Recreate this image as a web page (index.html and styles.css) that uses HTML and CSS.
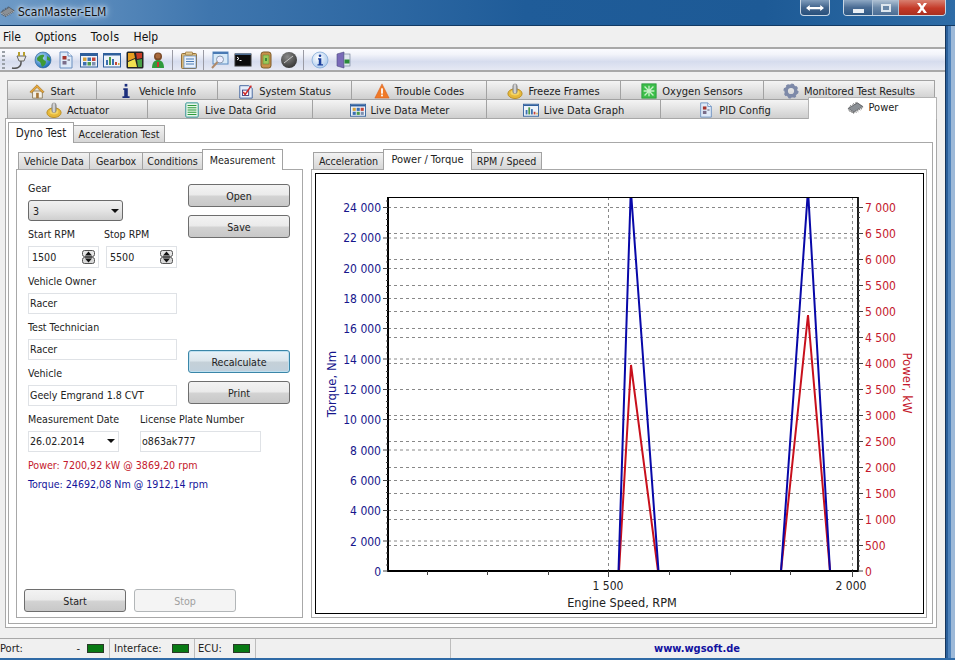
FILE: index.html
```html
<!DOCTYPE html>
<html lang="en">
<head>
<meta charset="utf-8">
<title>ScanMaster-ELM</title>
<link rel="stylesheet" href="styles.css">
</head>
<body>
<svg class="defs" width="0" height="0" aria-hidden="true">
  <defs>
    <radialGradient id="gGlobe" cx="40%" cy="35%" r="70%"><stop offset="0" stop-color="#bfe3ff"/><stop offset="1" stop-color="#1464b4"/></radialGradient>
    <radialGradient id="gInfo" cx="40%" cy="35%" r="70%"><stop offset="0" stop-color="#ffffff"/><stop offset="1" stop-color="#a9c8ec"/></radialGradient>
    <radialGradient id="gGauge" cx="40%" cy="30%" r="75%"><stop offset="0" stop-color="#8a8a8a"/><stop offset="1" stop-color="#333"/></radialGradient>
    <linearGradient id="gKnob" x1="0" x2="1" y1="0" y2="0"><stop offset="0" stop-color="#8d8d8d"/><stop offset=".5" stop-color="#e6e6e6"/><stop offset="1" stop-color="#777"/></linearGradient>
    <symbol id="i-chip" viewBox="0 0 18 14">
      <path d="M1 8 11 2l6 4-10 6z" fill="#8b9095" stroke="#3a3d40" stroke-width=".7"/>
      <path d="M1 8l6 4v1L1 9zM7 12l10-6v1L7 13z" fill="#e4e6e8" stroke="#555" stroke-width=".3"/>
      <path d="M2 10l1 1.500M4 11l1 1.500M6 12l1 1.500M9 11.500l1 1M11 10.500l1 1M13 9l1 1M15 8l1 1M3 6l1-1.500M6 4l1-1.500M9 2.500l1-1.500" stroke="#444" stroke-width=".8"/>
    </symbol>
    <symbol id="i-doc" viewBox="0 0 16 18">
      <path d="M2 1h8l4 4v12H2z" fill="#dfeaf8" stroke="#6a8fc0"/>
      <path d="M10 1v4h4" fill="#fff" stroke="#6a8fc0"/>
      <rect x="4.500" y="5" width="4" height="3.500" fill="#a5342c"/>
      <rect x="4.500" y="10" width="4" height="3.500" fill="#7a6d8a"/>
      <rect x="9.500" y="8" width="2.500" height="2" fill="#99a"/>
    </symbol>
    <symbol id="i-grid" viewBox="0 0 18 16">
      <rect x=".5" y="1.500" width="17" height="13.500" fill="#eef3fa" stroke="#2f5f9c"/>
      <rect x="1" y="2" width="16" height="2" fill="#2f5f9c"/>
      <rect x="3" y="5.500" width="3.500" height="3.500" fill="#d6a23a"/><rect x="7.500" y="5.500" width="3.500" height="3.500" fill="#3b6fb0"/><rect x="12" y="5.500" width="3.500" height="3.500" fill="#c4463a"/>
      <rect x="3" y="10" width="3.500" height="3.500" fill="#3b6fb0"/><rect x="7.500" y="10" width="3.500" height="3.500" fill="#4d9a4a"/><rect x="12" y="10" width="3.500" height="3.500" fill="#7d8fb0"/>
    </symbol>
    <symbol id="i-bars" viewBox="0 0 18 16">
      <rect x=".5" y="1.500" width="17" height="13.500" fill="#eef3fa" stroke="#2f5f9c"/>
      <rect x="1" y="2" width="16" height="1.500" fill="#2f5f9c"/>
      <rect x="3" y="8" width="2" height="5" fill="#3b6fb0"/><rect x="6" y="5" width="2" height="8" fill="#4d9a4a"/><rect x="9" y="7" width="2" height="6" fill="#3b6fb0"/><rect x="12" y="10" width="2" height="3" fill="#c4463a"/><rect x="15" y="11" width="1.500" height="2" fill="#d6a23a"/>
    </symbol>
    <symbol id="i-knob" viewBox="0 0 18 18">
      <ellipse cx="9" cy="12" rx="8" ry="5.500" fill="#e6b83a" stroke="#b68a1e"/>
      <ellipse cx="9" cy="11" rx="5" ry="3" fill="#f3d465"/>
      <rect x="6.500" y="1" width="5" height="11" rx="2.500" fill="url(#gKnob)" stroke="#777" stroke-width=".5"/>
    </symbol>
  </defs>
</svg>

<header class="titlebar">
  <svg class="title-icon"><use href="#i-chip"/></svg>
  <span class="title-text">ScanMaster-ELM</span>
  <div class="caption-switch"><svg viewBox="0 0 24 10" class="arrows"><path d="M0 5l5-4v2.500h14V1l5 4-5 4V6.500H5V9z" fill="#fff"/></svg></div>
  <div class="caption-group">
    <div class="cap cap-min"><span class="min-bar"></span></div>
    <div class="cap cap-max"><span class="max-box"></span></div>
    <div class="cap cap-close"><svg viewBox="0 0 12 10" class="close-x"><path d="M1 0h3l2 3 2-3h3L7.500 5 11 10H8L6 7l-2 3H1l3.500-5z" fill="#fff"/></svg></div>
  </div>
</header>

<div class="window">
  <nav class="menu"><span>File</span><span>Options</span><span class="menu-tools">Tools</span><span>Help</span></nav>

  <div class="toolbar">
    <span class="grip"></span>
    <svg class="tool tool-plug" viewBox="0 0 18 18"><path d="M1 17c5 1 9-1 9-5V9" fill="none" stroke="#555" stroke-width="1.500"/><path d="M6 5h9l-2 5H8z" fill="#e8e8e8" stroke="#666"/><path d="M8 1v4M13 1v4" stroke="#b8a030" stroke-width="2"/></svg>
    <svg class="tool" viewBox="0 0 18 18"><circle cx="9" cy="9" r="8" fill="url(#gGlobe)" stroke="#2a5f90" stroke-width=".6"/><path d="M3 7c2-3 5-4 7-3 1 2-2 2-1 4s3 1 3 3-2 4-4 5c-1-2-1-4-2-5s-3 0-3-4zM13 5l3 2 0 3-3-1z" fill="#3f9a36"/></svg>
    <svg class="tool"><use href="#i-doc"/></svg>
    <svg class="tool"><use href="#i-grid"/></svg>
    <svg class="tool"><use href="#i-bars"/></svg>
    <svg class="tool" viewBox="0 0 18 18"><rect x=".5" y=".5" width="17" height="17" rx="1.500" fill="#222"/><path d="M2 2h6l1 5-7 3z" fill="#e8a020"/><path d="M10 2h6v5l-5 1z" fill="#c83c28"/><path d="M2 11l7-3 2 8H2z" fill="#f2e050"/><path d="M11 9l5-1v8h-4z" fill="#48a048"/></svg>
    <svg class="tool" viewBox="0 0 18 18"><circle cx="9" cy="5.500" r="4" fill="#7a4a28"/><path d="M3 17c0-6 3-8 6-8s6 2 6 8z" fill="#2f9a3c"/><circle cx="9" cy="5" r="2.500" fill="#a8683c"/><path d="M8 11h2v5H8z" fill="#c33"/></svg>
    <span class="sep"></span>
    <svg class="tool tool-after" viewBox="0 0 18 18"><rect x="1.500" y="2.500" width="15" height="15" rx="1" fill="#d9b878" stroke="#94703a"/><rect x="4" y="5" width="12" height="12" fill="#e8f0fa" stroke="#5a88c0" stroke-width=".7"/><rect x="5.500" y="1" width="7" height="3" rx=".5" fill="#e2c992" stroke="#94703a" stroke-width=".7"/><path d="M6 8h8M6 10.500h8M6 13h8" stroke="#4a7ab4"/></svg>
    <span class="sep"></span>
    <svg class="tool tool-after" viewBox="0 0 18 18"><rect x="2" y="1" width="15" height="12" fill="#d8eaf8" stroke="#5a8ac0"/><rect x="2" y="1" width="15" height="2" fill="#4a7ab4"/><circle cx="9" cy="8.500" r="3.500" fill="#eef" stroke="#8a9ab0"/><path d="M6.500 11 1 17" stroke="#b08a6a" stroke-width="2"/></svg>
    <svg class="tool" viewBox="0 0 18 18"><rect x="1" y="3" width="16" height="12" fill="#0a0a0a" stroke="#3a3a3a"/><rect x="1" y="2.500" width="16" height="1.500" fill="#4a6a90"/><path d="M3 6l2 1.500L3 9" fill="none" stroke="#fff"/><rect x="5.500" y="9" width="2" height="1" fill="#fff"/></svg>
    <svg class="tool" viewBox="0 0 18 18"><rect x="4" y="1" width="10" height="16" rx="2.500" fill="#c8904a" stroke="#7a5a28"/><rect x="6" y="4" width="6" height="9" fill="#9ac85a" stroke="#5a7a30" stroke-width=".5"/><rect x="8" y="7" width="2" height="3" fill="#3a8a3a"/></svg>
    <svg class="tool" viewBox="0 0 18 18"><circle cx="9" cy="9" r="8" fill="url(#gGauge)"/><path d="M4 12 13 5" stroke="#c8c8c8" stroke-width="1"/></svg>
    <span class="sep"></span>
    <svg class="tool tool-after" viewBox="0 0 18 18"><circle cx="9" cy="9" r="8" fill="url(#gInfo)" stroke="#7aa4d4" stroke-width=".7"/><circle cx="9" cy="4.800" r="1.300" fill="#1c3f9c"/><path d="M7 7.300h3.300v6H12v1.200H6.500v-1.200h1.300V8.500H7z" fill="#1c3f9c"/></svg>
    <svg class="tool" viewBox="0 0 18 18"><path d="M3 3l7-2v16l-7-2z" fill="#7a6ab8" stroke="#4a4a80" stroke-width=".6"/><rect x="10" y="3" width="6" height="12" fill="#dfe6ef" stroke="#6a7a90" stroke-width=".6"/><rect x="10.500" y="8.500" width="5" height="4" fill="#2a8a3a"/></svg>
  </div>

  <main class="workspace">
    <div class="tabrow tabrow-top">
      <div class="tab w89"><svg class="ticon" viewBox="0 0 18 18"><path d="M4 9h11v8H4z" fill="#f4f0e6" stroke="#8a7a5a"/><path d="M1 10l8-8 8 8-2 1-6-6-6 6z" fill="#e8a83a" stroke="#9a6a1a" stroke-width=".7"/><rect x="8" y="11" width="3" height="6" fill="#a8783a"/></svg>Start</div>
      <div class="tab w121"><svg class="ticon" viewBox="0 0 18 18"><rect x="7.500" y="1" width="3" height="3" fill="#1c2f7c"/><path d="M6 6h5v9h2v2H5v-2h2V8H6z" fill="#1c2f7c"/></svg>Vehicle Info</div>
      <div class="tab w134"><svg class="ticon" viewBox="0 0 18 18"><path d="M2 3h10l4 3v11H2z" fill="#e6eefa" stroke="#3a5f9c"/><rect x="5" y="8" width="7" height="6" fill="#fff" stroke="#3a3a7c"/><path d="M6 10l2 3 7-10" fill="none" stroke="#d02a2a" stroke-width="1.700"/></svg>System Status</div>
      <div class="tab w135"><svg class="ticon" viewBox="0 0 18 18"><path d="M9 1l8 16H1z" fill="#f07a28" stroke="#d85a1a" stroke-width=".6"/><rect x="8" y="6" width="2" height="6" fill="#fff"/><rect x="8" y="13" width="2" height="2" fill="#fff"/></svg>Trouble Codes</div>
      <div class="tab w134"><svg class="ticon"><use href="#i-knob"/></svg>Freeze Frames</div>
      <div class="tab w143"><svg class="ticon" viewBox="0 0 18 18"><rect x="1" y="1" width="16" height="16" fill="#3cbf4a" stroke="#2a9a3a"/><path d="M4 4l10 10M14 4 4 14M9 3v12M3 9h12" stroke="#c8f0c8" stroke-width="1.500"/></svg>Oxygen Sensors</div>
      <div class="tab w172"><svg class="ticon" viewBox="0 0 18 18"><circle cx="9" cy="9" r="5.500" fill="none" stroke="#7d89a8" stroke-width="4"/><circle cx="9" cy="9" r="7.500" fill="none" stroke="#7d89a8" stroke-width="2" stroke-dasharray="3 2.900"/></svg>Monitored Test Results</div>
    </div>
    <div class="tabrow tabrow-bottom">
      <div class="tab w140"><svg class="ticon"><use href="#i-knob"/></svg>Actuator</div>
      <div class="tab w165"><svg class="ticon" viewBox="0 0 18 18"><rect x="2" y="1" width="14" height="16" rx="1" fill="#e8f6ea" stroke="#1f8a8a"/><path d="M4 4h10M4 6.500h10M4 9h10M4 11.500h10M4 14h10" stroke="#2a9a3a" stroke-width="1.200"/></svg>Live Data Grid</div>
      <div class="tab w174"><svg class="ticon"><use href="#i-grid"/></svg>Live Data Meter</div>
      <div class="tab w174"><svg class="ticon"><use href="#i-bars"/></svg>Live Data Graph</div>
      <div class="tab w148"><svg class="ticon"><use href="#i-doc"/></svg>PID Config</div>
      <div class="tab tab-power w128"><svg class="ticon chip"><use href="#i-chip"/></svg>Power</div>
    </div>

    <section class="panel-outer">
      <div class="tabrow tabrow-dyno">
        <div class="tab-s tab-s-active w65">Dyno Test</div>
        <div class="tab-s tab-s-low w91">Acceleration Test</div>
      </div>
      <div class="panel-second">
        <div class="col col-left">
          <div class="tabrow subtabs">
            <div class="tab-s w71">Vehicle Data</div>
            <div class="tab-s w53">Gearbox</div>
            <div class="tab-s w60">Conditions</div>
            <div class="tab-s tab-s-active w80">Measurement</div>
          </div>
          <div class="panel-form">
            <div class="upper">
              <div class="form-col">
                <div class="label">Gear</div>
                <div class="control select"><span>3</span><i class="caret"></i></div>
                <div class="pair">
                  <div class="pair-item">
                    <div class="label">Start RPM</div>
                    <div class="control spin"><span>1500</span><svg class="spin-btn" viewBox="0 0 13 14"><rect x=".5" y=".5" width="12" height="6" rx="2" fill="#e6e6e6" stroke="#555"/><rect x=".5" y="7.500" width="12" height="6" rx="2" fill="#d8d8d8" stroke="#555"/><path d="M6.500 1.500l3.500 4H3zM6.500 12.500l3.500-4H3z" fill="#111"/></svg></div>
                  </div>
                  <div class="pair-item">
                    <div class="label">Stop RPM</div>
                    <div class="control spin"><span>5500</span><svg class="spin-btn" viewBox="0 0 13 14"><rect x=".5" y=".5" width="12" height="6" rx="2" fill="#e6e6e6" stroke="#555"/><rect x=".5" y="7.500" width="12" height="6" rx="2" fill="#d8d8d8" stroke="#555"/><path d="M6.500 1.500l3.500 4H3zM6.500 12.500l3.500-4H3z" fill="#111"/></svg></div>
                  </div>
                </div>
                <div class="label">Vehicle Owner</div>
                <div class="control input">Racer</div>
                <div class="label">Test Technician</div>
                <div class="control input">Racer</div>
                <div class="label">Vehicle</div>
                <div class="control input input-last">Geely Emgrand 1.8 CVT</div>
              </div>
              <div class="btn-col">
                <div class="btn">Open</div>
                <div class="btn btn-save">Save</div>
                <div class="btn btn-focus">Recalculate</div>
                <div class="btn btn-print">Print</div>
              </div>
            </div>
            <div class="date-row">
              <div class="date-item">
                <div class="label">Measurement Date</div>
                <div class="control input date"><span>26.02.2014</span><i class="caret"></i></div>
              </div>
              <div class="plate-item">
                <div class="label">License Plate Number</div>
                <div class="control input">o863ak777</div>
              </div>
            </div>
            <div class="result result-power">Power: 7200,92 kW @ 3869,20 rpm</div>
            <div class="result result-torque">Torque: 24692,08 Nm @ 1912,14 rpm</div>
            <div class="run-row">
              <div class="btn">Start</div>
              <div class="btn btn-disabled">Stop</div>
            </div>
          </div>
        </div>

        <div class="col col-right">
          <div class="tabrow subtabs">
            <div class="tab-s w70">Acceleration</div>
            <div class="tab-s tab-s-active w88">Power / Torque</div>
            <div class="tab-s w70">RPM / Speed</div>
          </div>
          <div class="panel-chart">
            <svg class="chart" viewBox="315 173 609 441" width="609" height="441">
              <defs><clipPath id="plotClip"><rect x="388" y="197" width="470" height="374"/></clipPath></defs>
              <rect x="315.500" y="173.500" width="608" height="440" fill="#fff" stroke="#000"/>
              <g class="grid">
                <path d="M388 207.500H858M388 238H858M388 268.500H858M388 298.500H858M388 328.500H858M388 359H858M388 389.500H858M388 419.500H858M388 450H858M388 480.500H858M388 510.500H858M388 541H858"/>
                <path d="M388 233.500H858M388 259.500H858M388 285.500H858M388 311.500H858M388 337.500H858M388 363.500H858M388 415.500H858M388 441.500H858M388 467.500H858M388 493.500H858M388 519.500H858M388 545.500H858"/>
                <path d="M608.500 197V571M852.500 197V571"/>
              </g>
              <g clip-path="url(#plotClip)" class="curves">
                <path class="curve-red" d="M619 571 631 365 658 571M781 571 808 315 830 571"/>
                <path class="curve-blue" d="M618.500 571 630.500 199 631.500 199 658.500 571M781 571 808 190 830 571"/>
              </g>
              <rect class="plot-frame" x="388.500" y="197.500" width="469.500" height="373.500"/>
              <path class="axis-thick" d="M388 197V572M387 571H858"/>
              <path class="axis-right" d="M858 197V572"/>
              <g class="ticks">
                <path d="M383 207.500H388M383 238H388M383 268.500H388M383 298.500H388M383 328.500H388M383 359H388M383 389.500H388M383 419.500H388M383 450H388M383 480.500H388M383 510.500H388M383 541H388M383 571H388"/>
                <path d="M858 207.500H863M858 233.500H863M858 259.500H863M858 285.500H863M858 311.500H863M858 337.500H863M858 363.500H863M858 389.500H863M858 415.500H863M858 441.500H863M858 467.500H863M858 493.500H863M858 519.500H863M858 545.500H863M858 571H863"/>
                <path d="M427.500 571V575M487.500 571V575M548.500 571V575M608.500 571V577M669.500 571V575M730.500 571V575M790.500 571V575M852.500 571V577"/>
              </g>
              <path class="ticks-minor" d="M386 201H388M386 213.500H388M386 219.500H388M386 225.500H388M386 231.500H388M386 244H388M386 250H388M386 256H388M386 262H388M386 274.500H388M386 280.500H388M386 286.500H388M386 292.500H388M386 304.500H388M386 310.500H388M386 316.500H388M386 322.500H388M386 335H388M386 341H388M386 347H388M386 353H388M386 365.500H388M386 371.500H388M386 377.500H388M386 383.500H388M386 395.500H388M386 401.500H388M386 407.500H388M386 413.500H388M386 426H388M386 432H388M386 438H388M386 444H388M386 456.500H388M386 462.500H388M386 468.500H388M386 474.500H388M386 486.500H388M386 492.500H388M386 498.500H388M386 504.500H388M386 517H388M386 523H388M386 529H388M386 535H388M386 547H388M386 553H388M386 559H388M386 565H388M858 212.500H860M858 217.500H860M858 223H860M858 228H860M858 238.500H860M858 243.500H860M858 249H860M858 254H860M858 264.500H860M858 269.500H860M858 275H860M858 280H860M858 290.500H860M858 295.500H860M858 301H860M858 306H860M858 316.500H860M858 321.500H860M858 327H860M858 332H860M858 342.500H860M858 347.500H860M858 353H860M858 358H860M858 368.500H860M858 373.500H860M858 379H860M858 384H860M858 394.500H860M858 399.500H860M858 405H860M858 410H860M858 420.500H860M858 425.500H860M858 431H860M858 436H860M858 446.500H860M858 451.500H860M858 457H860M858 462H860M858 472.500H860M858 477.500H860M858 483H860M858 488H860M858 498.500H860M858 503.500H860M858 509H860M858 514H860M858 524.500H860M858 529.500H860M858 535H860M858 540H860M858 550.500H860M858 555.500H860M858 561H860M858 566H860"/>
              <g class="y-left">
                <text x="381" y="212">24 000</text><text x="381" y="242">22 000</text><text x="381" y="273">20 000</text><text x="381" y="303">18 000</text><text x="381" y="333">16 000</text><text x="381" y="364">14 000</text><text x="381" y="394">12 000</text><text x="381" y="424">10 000</text><text x="381" y="455">8 000</text><text x="381" y="485">6 000</text><text x="381" y="515">4 000</text><text x="381" y="546">2 000</text><text x="381" y="576">0</text>
              </g>
              <g class="y-right">
                <text x="865" y="212">7 000</text><text x="865" y="238">6 500</text><text x="865" y="264">6 000</text><text x="865" y="290">5 500</text><text x="865" y="316">5 000</text><text x="865" y="342">4 500</text><text x="865" y="368">4 000</text><text x="865" y="394">3 500</text><text x="865" y="420">3 000</text><text x="865" y="446">2 500</text><text x="865" y="472">2 000</text><text x="865" y="498">1 500</text><text x="865" y="524">1 000</text><text x="865" y="550">500</text><text x="865" y="576">0</text>
              </g>
              <text class="title-left" transform="translate(336 384) rotate(-90)">Torque, Nm</text>
              <text class="title-right" transform="translate(903 383) rotate(90)">Power, kW</text>
              <text class="x-label" x="608" y="590">1 500</text>
              <text class="x-label" x="851" y="590">2 000</text>
              <text class="x-label x-title" x="622" y="607">Engine Speed, RPM</text>
            </svg>
          </div>
        </div>
      </div>
    </section>
  </main>

  <footer class="status">
    <div class="cell cell-port"><span>Port:</span><span class="dash">-</span><i class="led"></i></div>
    <div class="cell cell-iface"><span>Interface:</span><i class="led"></i></div>
    <div class="cell cell-ecu"><span>ECU:</span><i class="led"></i></div>
    <div class="cell cell-blank"></div>
    <div class="cell cell-link">www.wgsoft.de</div>
  </footer>
</div>
</body>
</html>
```

FILE: styles.css
```css
* { box-sizing: border-box; }
html, body { margin: 0; padding: 0; }
body {
  width: 955px; height: 660px; overflow: hidden; position: relative;
  font-family: "DejaVu Sans", sans-serif; font-stretch: condensed; font-size: 11px; color: #222;
  background: #2f6aa6;
}
.defs { position: absolute; }

/* title bar */
.titlebar {
  height: 26px; display: flex; align-items: flex-start;
  background: linear-gradient(90deg, #6e9ac6 0, #3f76ae 22%, #1f5c99 55%, #1d5a96 80%, #2e6ca6 100%);
  border-bottom: 1px solid #123a64;
}
.title-icon { width: 15px; height: 13px; margin: 5px 0 0 0; flex: none; }
.title-text { margin: 5px 0 0 3px; font-size: 12px; color: #111; text-shadow: 0 0 5px #dfeaf6, 0 0 8px #dfeaf6, 0 0 3px #dfeaf6; }
.caption-switch {
  margin-left: auto; width: 30px; height: 16px; display: flex; align-items: center; justify-content: center;
  border: 1px solid #c8d6e4; border-top: 0; border-radius: 0 0 4px 4px;
  background: linear-gradient(#7f9cbc, #42648c 50%, #28507c);
}
.arrows { width: 18px; height: 8px; }
.caption-group {
  margin: 0 9px 0 13px; width: 103px; height: 16px; display: flex;
  border: 1px solid #c8d6e4; border-top: 0; border-radius: 0 0 4px 4px; overflow: hidden;
}
.cap { display: flex; align-items: center; justify-content: center; height: 100%; }
.cap-min { width: 29px; background: linear-gradient(#8ea8c4, #4a6c94 50%, #2e5884); border-right: 1px solid #b0c4d8; }
.cap-max { width: 26px; background: linear-gradient(#b0c2d4, #6a88a8 50%, #4a6c94); border-right: 1px solid #b0c4d8; }
.cap-close { flex: 1; background: linear-gradient(#d88070, #c43a28 55%, #a83020); }
.min-bar { width: 11px; height: 4px; background: #e8eef4; margin-top: 6px; }
.max-box { width: 10px; height: 8px; border: 2px solid #dde6ee; background: #6a88a8; }
.close-x { width: 12px; height: 10px; }

/* window */
.window {
  width: 946px; height: 632px; background: #f0f0f0;
  border-right: 1px solid #16365c; border-bottom: 1px solid #16365c;
  box-shadow: 2px 0 0 #2a5f9a, 5px 0 0 #4f83bb, 9px 0 0 #9db9d8;
}
.menu { height: 21px; display: flex; align-items: center; font-size: 12px; color: #111; padding-left: 3px; gap: 14px; }
.menu-tools { letter-spacing: .5px; }
.toolbar {
  height: 25px; display: flex; align-items: center; padding-left: 11px;
  border-top: 2px solid #a8a8a8; border-bottom: 2px solid #a8a8a8;
  background: linear-gradient(#fbfbff 0, #f3f4fa 25%, #d6dcee 60%, #e6e9f4 100%);
}
.grip { width: 3px; height: 18px; margin-left: -9px; margin-right: 6px; background: repeating-linear-gradient(#9aa0a8 0 2px, transparent 2px 4px); }
.tool { width: 18px; height: 18px; margin-right: 5px; flex: none; }
.sep { width: 1px; height: 20px; background: #9a9aa4; flex: none; }
.tool-after { margin-left: 7px; }

/* top tabs */
.workspace { padding-top: 8px; }
.tabrow { display: flex; align-items: flex-end; }
.tabrow-top { height: 19px; margin-left: 7px; }
.tabrow-bottom { height: 19px; margin-left: 7px; position: relative; z-index: 2; }
.tab {
  height: 19px; display: flex; align-items: center; justify-content: center; gap: 5px; padding-top: 2px;
  border: 1px solid #a2a2a2; border-bottom: 0; margin-right: -1px; border-radius: 1px 1px 0 0;
  background: linear-gradient(#f4f4f4, #e6e6e6 40%, #cfcfcf);
  white-space: nowrap; flex: none;
}
.ticon { width: 16px; height: 16px; flex: none; }
.tab-power {
  height: 22px; margin-top: -2px; margin-bottom: -1px; background: #fff; align-items: flex-start; padding-top: 3px; border-color: #b4b4b4;
  position: relative; z-index: 3;
}
.chip { width: 17px; height: 13px; }
.w65 { width: 66px; } .w53 { width: 54px; } .w60 { width: 61px; } .w70 { width: 71px; } .w71 { width: 72px; }
.w80 { width: 81px; } .w88 { width: 89px; font-size: 11px; } .w89 { width: 90px; } .w91 { width: 92px; }
.w121 { width: 122px; } .w128 { width: 129px; } .w134 { width: 135px; } .w135 { width: 136px; }
.w140 { width: 141px; } .w143 { width: 144px; } .w148 { width: 149px; } .w165 { width: 166px; }
.w172 { width: 172px; } .w174 { width: 175px; }

/* panels */
.panel-outer {
  margin-left: 5px; width: 932px; height: 510px; padding: 3px 3px 3px 2px; font-size: 10.6px;
  background: #fff; border: 1px solid #a8a8a8;
}
.tabrow-dyno { height: 20px; position: relative; z-index: 1; }
.tabrow-dyno .tab-s-active { font-size: 11.500px; }
.tab-s {
  height: 17px; display: flex; align-items: center; justify-content: center; flex: none;
  border: 1px solid #a2a2a2; border-bottom: 0; margin-right: -1px;
  background: linear-gradient(#f2f2f2, #d6d6d6); white-space: nowrap;
}
.tab-s-active { height: 21px; margin-bottom: -1px; background: #fff; padding-bottom: 1px; position: relative; z-index: 1; }
.tab-s-low { height: 17px; }
.panel-second {
  height: 482px; width: 925px; padding: 7px 5px 5px 7px; display: flex; gap: 8px;
  border: 1px solid #a8a8a8; background: #fff;
}
.col { display: flex; flex-direction: column; }
.col-left { width: 287px; flex: none; }
.col-right { flex: 1; min-width: 0; }
.subtabs { height: 19px; margin-left: 2px; position: relative; z-index: 1; }
.panel-form {
  height: 449px; padding: 11px 11px 5px 11px; display: flex; flex-direction: column;
  border: 1px solid #a8a8a8; background: #fff;
}
.panel-chart { height: 449px; padding: 3px 2px 3px 3px; border: 1px solid #a8a8a8; background: #fff; }
.chart { display: block; }

/* form */
.upper { display: flex; gap: 11px; }
.form-col { width: 149px; }
.label { height: 14px; line-height: 14px; margin-bottom: 5px; white-space: nowrap; }
.pair-item + .pair-item .label { margin-left: -2px; }
.control { margin-bottom: 6px; display: flex; align-items: center; white-space: nowrap; }
.select {
  width: 95px; height: 21px; padding: 0 3px 0 4px; justify-content: space-between;
  border: 1px solid #6a6a6a; border-radius: 3px; background: linear-gradient(#f0f0f0, #e4e4e4 50%, #cfcfcf);
}
.caret { display: block; width: 0; height: 0; border: 4px solid transparent; border-top: 4px solid #111; border-bottom: 0; }
.pair { display: flex; gap: 7px; }
.pair-item { width: 71px; }
.spin { height: 22px; padding: 0 3px 1px 3px; justify-content: space-between; border: 1px solid #dfe2e6; background: #fff; }
.spin-btn { width: 13px; height: 14px; flex: none; }
.input { height: 21px; padding: 0 1px 1px; border: 1px solid #dfe2e6; background: #fff; }
.input-last { margin-bottom: 0; }
.btn-col { width: 102px; padding-top: 3px; display: flex; flex-direction: column; }
.btn {
  width: 102px; height: 23px; display: flex; align-items: center; justify-content: center; flex: none;
  border: 1px solid #6e6e6e; border-radius: 3px; color: #222; padding-top: 1px;
  background: linear-gradient(#f3f3f3, #ebebeb 45%, #d2d2d2 55%, #c8c8c8 100%);
}
.btn-save { margin-top: 8px; }
.btn-focus { margin-top: 112px; padding-top: 0; border-color: #3a86a8; background: linear-gradient(#e8f2f8, #dce6ec 45%, #c4d0d8 55%, #c0d0dc); box-shadow: inset 0 0 0 1px #bfe0f0; }
.btn-print { margin-top: 8px; }
.btn-disabled { border-color: #b2b6b8; background: #f4f4f4; color: #a0a0a0; }
.date-row { display: flex; gap: 21px; margin-top: 6px; }
.date-item { width: 91px; }
.plate-item { width: 121px; }
.date { justify-content: space-between; padding-right: 3px; }
.result { height: 14px; line-height: 14px; white-space: nowrap; }
.result-power { color: #c4182c; }
.result-torque { color: #14149a; margin-top: 5px; }
.run-row { margin-top: auto; margin-left: -4px; display: flex; gap: 8px; }
.run-row .btn { padding-top: 0; }

/* chart */
.grid path { fill: none; stroke: #888; stroke-width: 1; stroke-dasharray: 3 3; }
.curves path { fill: none; stroke-linejoin: miter; }
.curve-red { stroke: #c8101c; stroke-width: 2; }
.curve-blue { stroke: #0808a8; stroke-width: 2; }
.plot-frame { fill: none; stroke: #000; stroke-width: 1; }
.axis-thick { fill: none; stroke: #000; stroke-width: 2; }
.axis-right { fill: none; stroke: #000; stroke-width: 1.500; }
.ticks path, .ticks-minor { fill: none; stroke: #444; stroke-width: 1; }
.y-left text { font-size: 12px; fill: #16168c; text-anchor: end; }
.y-right text { font-size: 12px; fill: #c4182c; }
.title-left { font-size: 13px; fill: #16168c; text-anchor: middle; }
.title-right { font-size: 13px; fill: #c4182c; text-anchor: middle; }
.x-label { font-size: 12px; fill: #222; text-anchor: middle; }
.x-title { font-size: 12.600px; }

/* status bar */
.status { margin-top: 10px; height: 20px; display: flex; border-top: 1px solid #a8a8a8; background: #f0f0f0; }
.cell { height: 100%; display: flex; align-items: center; border-right: 1px solid #bdbdbd; white-space: nowrap; }
.cell-port { width: 110px; }
.dash { margin-left: auto; margin-right: 7px; }
.led { display: block; width: 17px; height: 9px; background: #087a14; border: 1px solid #2a3a2a; margin-right: 5px; flex: none; }
.cell-iface { width: 85px; padding-left: 4px; justify-content: space-between; }
.cell-ecu { width: 61px; padding-left: 3px; justify-content: space-between; }
.cell-blank { width: 195px; }
.cell-link { flex: 1; justify-content: center; border-right: 0; font-weight: bold; color: #1212a0; margin-right: 2px; }
```
